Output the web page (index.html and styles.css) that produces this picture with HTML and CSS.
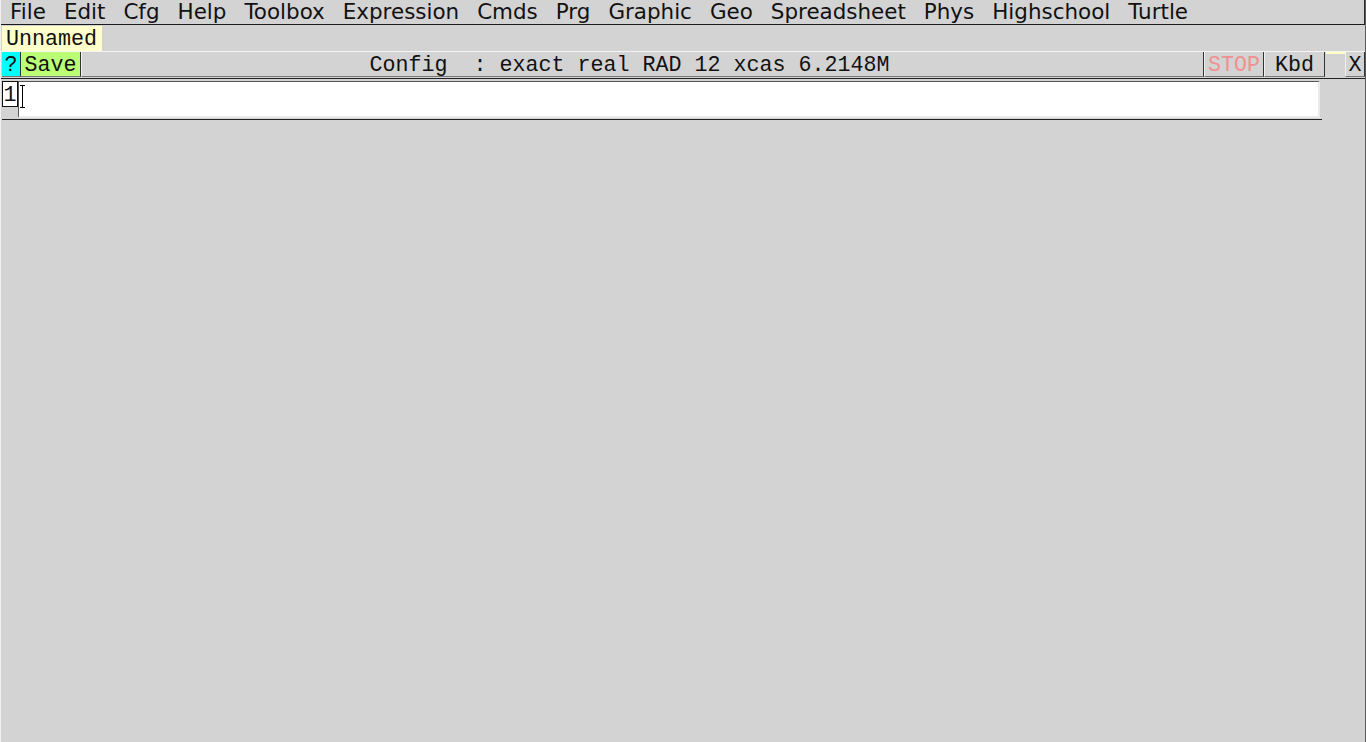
FILE: index.html
```html
<!DOCTYPE html>
<html>
<head>
<meta charset="utf-8">
<link rel="stylesheet" href="styles.css">
</head>
<body>
<div class="win">
  <div class="menubar">
    <span class="mi">File</span><span class="mi">Edit</span><span class="mi">Cfg</span><span class="mi">Help</span><span class="mi">Toolbox</span><span class="mi">Expression</span><span class="mi">Cmds</span><span class="mi">Prg</span><span class="mi">Graphic</span><span class="mi">Geo</span><span class="mi">Spreadsheet</span><span class="mi">Phys</span><span class="mi">Highschool</span><span class="mi">Turtle</span>
  </div>
  <div class="tabs">
    <div class="tab">Unnamed</div>
  </div>
  <div class="toolbar">
    <div class="btn help">?</div>
    <div class="btn save">Save</div>
    <div class="btn config">Config  : exact real RAD 12 xcas 6.2148M  </div>
    <div class="btn stop">STOP</div>
    <div class="btn kbd">Kbd</div>
    <div class="gap"></div>
    <div class="btn close">X</div>
  </div>
  <div class="editrow">
    <div class="entry">
      <div class="lineno">1</div>
      <div class="input"><span class="caret"></span></div>
    </div>
  </div>
</div>
</body>
</html>
```
FILE: styles.css
```css
html, body {
  margin: 0;
  padding: 0;
  background: #d3d3d3;
}
.win {
  width: 1366px;
  height: 742px;
  box-sizing: border-box;
  border-left: 1px solid #f0f0f0;
  border-right: 1px solid #5a5a5a;
  background: #d3d3d3;
  overflow: hidden;
}
.menubar {
  height: 24px;
  border-bottom: 1px solid #1a1a1a;
  border-right: 1px solid #2a2a2a;
  display: flex;
  align-items: center;
  font-family: "DejaVu Sans", sans-serif;
  font-size: 21.45px;
  color: #111;
}
.mi {
  padding: 0 9px;
  line-height: 24px;
}
.tabs {
  height: 26px;
  padding-left: 1px;
  display: flex;
  align-items: flex-end;
}
.tab {
  box-sizing: border-box;
  width: 100px;
  height: 25px;
  background: #ffffcc;
  padding: 2px 0 0 4px;
  font-family: "Liberation Mono", monospace;
  font-size: 21.67px;
  line-height: 23px;
  color: #111;
}
.toolbar {
  height: 26px;
  display: flex;
  padding-left: 1px;
  border-top: 1px solid #f4f4f4;
  border-bottom: 1px solid #222;
  font-family: "Liberation Mono", monospace;
  font-size: 21.67px;
  color: #111;
  width: 1363px;
}
.btn {
  box-sizing: border-box;
  height: 25px;
  padding-top: 3px;
  line-height: 21px;
  border-right: 1px solid #333;
  border-bottom: 1px solid #777;
  text-align: center;
  white-space: pre;
}
.help {
  width: 19px;
  background: #00ffff;
}
.save {
  width: 60px;
  background: #bbff77;
}
.config {
  width: 1124px;
  background: #d3d3d3;
  border-left: 1px solid #f0f0f0;
}
.stop {
  width: 60px;
  color: #f09090;
  border-left: 1px solid #f0f0f0;
}
.kbd {
  width: 61px;
  border-left: 1px solid #f0f0f0;
}
.gap {
  width: 19px;
  height: 25px;
  border-top: 2px solid #ffffc0;
  box-sizing: border-box;
  margin-left: 1px;
}
.close {
  width: 20px;
  border-left: 1px solid #f0f0f0;
}
.editrow {
  padding: 1px 0 0 1px;
}
.entry {
  width: 1320px;
  height: 39px;
  border-bottom: 1px solid #222;
  display: flex;
  align-items: flex-start;
}
.lineno {
  box-sizing: border-box;
  width: 16px;
  height: 26px;
  background: #fff;
  border: 1px solid #111;
  font-family: "Liberation Mono", monospace;
  font-size: 21.67px;
  line-height: 27px;
  text-align: center;
  color: #111;
  margin-top: 1px;
}
.input {
  box-sizing: border-box;
  width: 1302px;
  height: 37px;
  background: #fff;
  border-left: 1px solid #555;
  border-top: 1px solid #555;
  border-right: 2px solid #eaeaea;
  border-bottom: 2px solid #eaeaea;
  margin-top: 1px;
  position: relative;
}
.caret {
  position: absolute;
  left: 3px;
  top: 3px;
  width: 1px;
  height: 23px;
  background: #000;
}
.caret::before, .caret::after {
  content: "";
  position: absolute;
  left: -2px;
  width: 5px;
  height: 1px;
  background: #000;
}
.caret::before { top: 0; }
.caret::after { bottom: 0; }
```
